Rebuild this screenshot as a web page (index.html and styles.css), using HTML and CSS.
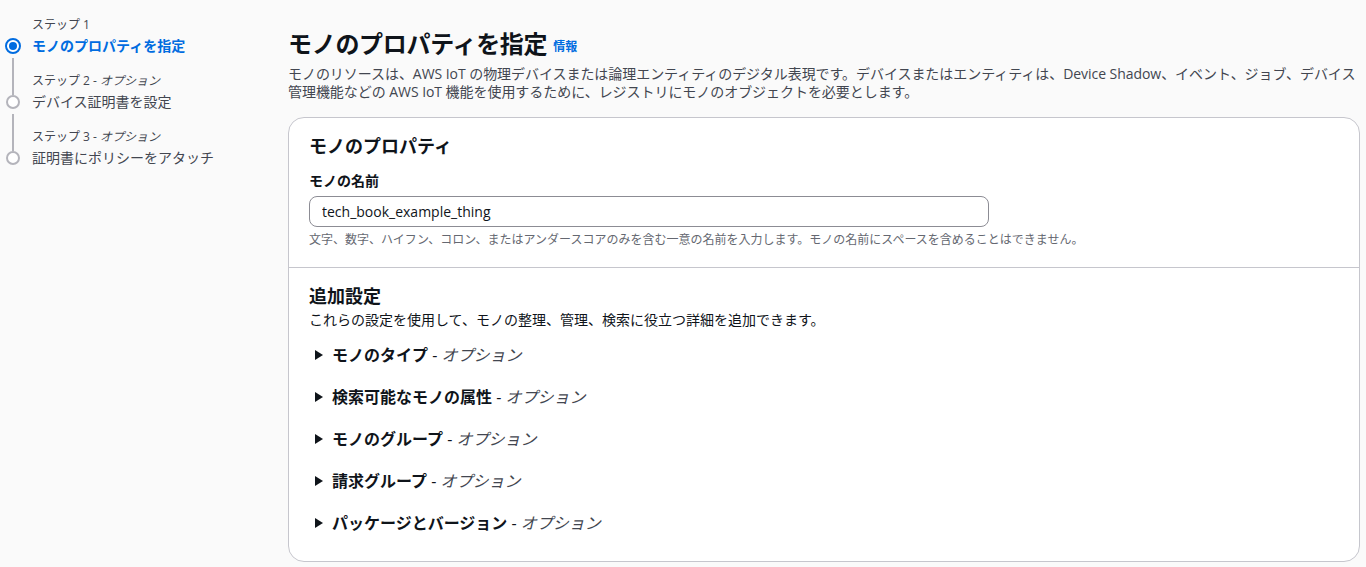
FILE: index.html
```html
<!DOCTYPE html>
<html lang="ja">
<head>
<meta charset="utf-8">
<title>モノを作成</title>
<link rel="stylesheet" href="styles.css">
</head>
<body>
<div class="layout">
  <nav class="steps">
    <div class="step active">
      <div class="step-label">ステップ 1</div>
      <div class="step-row">
        <svg class="step-icon" width="16" height="16" viewBox="0 0 16 16"><circle cx="8" cy="8" r="7" fill="#fff" stroke="#006ce0" stroke-width="2"/><circle cx="8" cy="8" r="4" fill="#006ce0"/></svg>
        <span class="step-title">モノのプロパティを指定</span>
      </div>
    </div>
    <div class="step">
      <div class="step-label">ステップ 2 - <i>オプション</i></div>
      <div class="step-row">
        <svg class="step-icon" width="16" height="16" viewBox="0 0 16 16"><circle cx="8" cy="8" r="6" fill="#fff" stroke="#b4b4bb" stroke-width="2"/></svg>
        <span class="step-title">デバイス証明書を設定</span>
      </div>
    </div>
    <div class="step last">
      <div class="step-label">ステップ 3 - <i>オプション</i></div>
      <div class="step-row">
        <svg class="step-icon" width="16" height="16" viewBox="0 0 16 16"><circle cx="8" cy="8" r="6" fill="#fff" stroke="#b4b4bb" stroke-width="2"/></svg>
        <span class="step-title">証明書にポリシーをアタッチ</span>
      </div>
    </div>
  </nav>
  <main class="main">
    <header class="page-header">
      <h1 class="page-title">モノのプロパティを指定 <a class="info" href="#">情報</a></h1>
      <p class="page-desc">モノのリソースは、AWS IoT の物理デバイスまたは論理エンティティのデジタル表現です。デバイスまたはエンティティは、Device Shadow、イベント、ジョブ、デバイス管理機能などの AWS IoT 機能を使用するために、レジストリにモノのオブジェクトを必要とします。</p>
    </header>
    <section class="card">
      <div class="card-section">
        <h2 class="card-title">モノのプロパティ</h2>
        <label class="field-label" for="thing-name">モノの名前</label>
        <input id="thing-name" class="text-input" type="text" value="tech_book_example_thing">
        <p class="field-hint">文字、数字、ハイフン、コロン、またはアンダースコアのみを含む一意の名前を入力します。モノの名前にスペースを含めることはできません。</p>
      </div>
      <div class="card-section second">
        <h2 class="card-title">追加設定</h2>
        <p class="section-desc">これらの設定を使用して、モノの整理、管理、検索に役立つ詳細を追加できます。</p>
        <ul class="expanders">
          <li class="expander"><span class="caret"></span><b>モノのタイプ</b> - <i>オプション</i></li>
          <li class="expander"><span class="caret"></span><b>検索可能なモノの属性</b> - <i>オプション</i></li>
          <li class="expander"><span class="caret"></span><b>モノのグループ</b> - <i>オプション</i></li>
          <li class="expander"><span class="caret"></span><b>請求グループ</b> - <i>オプション</i></li>
          <li class="expander"><span class="caret"></span><b>パッケージとバージョン</b> - <i>オプション</i></li>
        </ul>
      </div>
    </section>
  </main>
</div>
</body>
</html>
```
FILE: styles.css
```css
* { box-sizing: border-box; }
html, body { margin: 0; padding: 0; }
body {
  background: #fafafa;
  color: #0f141a;
  font-family: "Open Sans", "Noto Sans CJK JP", sans-serif;
  font-size: 14px;
  line-height: 20px;
  overflow: hidden;
}
.layout {
  display: flex;
  width: 1366px;
  height: 567px;
}
.steps {
  width: 288px;
  flex: none;
  padding: 17px 0 0 5px;
  display: flex;
  flex-direction: column;
  gap: 17px;
}
.step { position: relative; }
.step::after {
  content: "";
  position: absolute;
  left: 7px;
  top: 41px;
  width: 2px;
  height: 37px;
  background: #b4b4bb;
}
.step.last::after { display: none; }
.step-label {
  padding-left: 27px;
  font-size: 12px;
  line-height: 16px;
  color: #424650;
  margin-bottom: 3px;
}
.step-label i { font-style: italic; }
.step-row {
  display: flex;
  align-items: center;
  gap: 11px;
  height: 20px;
}
.step-icon { flex: none; display: block; }
.step-title {
  font-size: 14px;
  line-height: 20px;
  color: #424650;
}
.step.active .step-title { color: #006ce0; font-weight: 700; }

.main {
  flex: 1;
  padding: 29px 4px 0 0;
  min-width: 0;
}
.page-title {
  margin: 0;
  font-size: 24px;
  line-height: 30px;
  font-weight: 700;
  letter-spacing: -0.3px;
}
.info {
  font-size: 12px;
  line-height: 16px;
  font-weight: 700;
  color: #006ce0;
  text-decoration: none;
  letter-spacing: 0;
  vertical-align: 2px;
}
.page-desc {
  margin: 6px 0 0;
  font-size: 14px;
  line-height: 18px;
  color: #424650;
  letter-spacing: -0.05px;
}
.card {
  margin-top: 16px;
  margin-right: 2px;
  background: #fff;
  border: 1px solid #c6c6cd;
  border-radius: 16px;
  height: 445px;
  overflow: hidden;
}
.card-section {
  padding: 17px 20px 19px;
}
.card-section.second {
  border-top: 1px solid #c6c6cd;
  padding-top: 17px;
}
.card-title {
  margin: 0;
  font-size: 18px;
  line-height: 22px;
  font-weight: 700;
}
.field-label {
  display: block;
  margin-top: 15px;
  font-size: 14px;
  line-height: 18px;
  font-weight: 700;
}
.text-input {
  display: block;
  margin-top: 6px;
  width: 680px;
  height: 31px;
  border: 1px solid #8c8c94;
  border-radius: 8px;
  padding: 0 12px;
  font: inherit;
  font-size: 14px;
  color: #0f141a;
  background: #fff;
}
.field-hint {
  margin: 5px 0 0;
  font-size: 12px;
  line-height: 16px;
  color: #656871;
}
.section-desc {
  margin: 3px 0 0;
  font-size: 14px;
  line-height: 20px;
  color: #0f141a;
}
.expanders {
  list-style: none;
  margin: 14px 0 0;
  padding: 0;
  display: flex;
  flex-direction: column;
  gap: 20px;
}
.expander {
  display: flex;
  align-items: center;
  font-size: 16px;
  line-height: 22px;
  color: #0f141a;
  white-space: pre;
}
.expander b { font-weight: 700; }
.expander i { font-style: italic; color: #424650; }
.caret {
  width: 0;
  height: 0;
  border-top: 5px solid transparent;
  border-bottom: 5px solid transparent;
  border-left: 8px solid #0f141a;
  margin: 0 9px 0 6px;
  flex: none;
}
```
